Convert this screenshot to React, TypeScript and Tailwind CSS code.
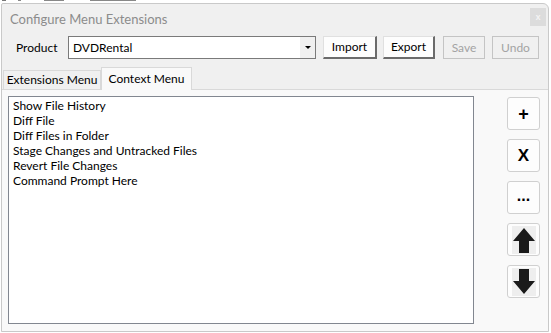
import React from "react";

const font = { fontFamily: "Lato, 'Noto Sans', sans-serif" };

function UpArrow() {
  return (
    <svg width="24" height="28" viewBox="0 0 24 28">
      <rect x="0" y="0" width="24" height="28" fill="#eeeeee" />
      <path d="M12 2 L23 15 L17 15 L17 27 L7 27 L7 15 L1 15 Z" fill="#1a1a1a" />
    </svg>
  );
}

function DownArrow() {
  return (
    <svg width="24" height="28" viewBox="0 0 24 28">
      <rect x="0" y="0" width="24" height="28" fill="#eeeeee" />
      <path d="M12 26 L23 13 L17 13 L17 1 L7 1 L7 13 L1 13 Z" fill="#1a1a1a" />
    </svg>
  );
}

function SideButton({ children }: { children: React.ReactNode }) {
  return (
    <div className="w-[33px] h-[33px] flex items-center justify-center bg-[#fdfdfd] border border-[#d0d0d0] rounded-[3px]">
      {children}
    </div>
  );
}

function ActionButton({ label, disabled, w }: { label: string; disabled?: boolean; w: string }) {
  return disabled ? (
    <div className={`${w} h-[23px] flex items-center justify-center border border-[#c4c4c4] bg-[#f0f0f0] text-[12px] text-[#a3a3a3]`}>
      {label}
    </div>
  ) : (
    <div className={`${w} h-[23px] flex items-center justify-center bg-[#fdfdfd] border-t border-l border-[#e0e0e0] border-r-2 border-b-2 border-r-[#6b6b6b] border-b-[#6b6b6b] text-[12px] text-black`}>
      {label}
    </div>
  );
}

const items = [
  "Show File History",
  "Diff File",
  "Diff Files in Folder",
  "Stage Changes and Untracked Files",
  "Revert File Changes",
  "Command Prompt Here",
];

export default function App() {
  return (
    <div className="w-[551px] h-[333px] bg-white relative overflow-hidden" style={font}>
      <div className="h-[3px] flex items-start bg-white">
        <div className="ml-[2px] w-[4px] h-[1px] bg-[#777]" />
        <div className="ml-[12px] w-[3px] h-[1px] bg-[#888]" />
        <div className="ml-[23px] w-[20px] h-[1px] bg-[#888]" />
        <div className="ml-[26px] w-[46px] h-[1px] bg-[#888]" />
      </div>
      <div className="ml-[1px] w-[548px] h-[329px] border border-[#c9c9c9] rounded-tr-[6px] rounded-tl-[2px] bg-[#f0f0f0] flex flex-col">
        {/* title */}
        <div className="h-[32px] flex items-start justify-between">
          <div className="pl-[8px] pt-[6px] text-[13px] text-[#8c8c8c]">Configure Menu Extensions</div>
          <div className="mt-[4px] mr-[2px] w-[16px] h-[18px] bg-[#dcdcdc] flex items-center justify-center text-[9px] text-[#f4f4f4] font-bold">
            x
          </div>
        </div>
        {/* product row */}
        <div className="h-[23px] flex items-center">
          <div className="pl-[14px] w-[66px] text-[12px] text-black">Product</div>
          <div className="w-[248px] h-[23px] bg-white border border-[#7a7a7a] flex items-center">
            <div className="flex-1 pl-[4px] text-[12px] text-black">DVDRental</div>
            <div className="w-[15px] h-full bg-[#f0f0f0] flex items-center justify-center">
              <svg width="6" height="3" viewBox="0 0 6 3"><path d="M0 0 L6 0 L3 3 Z" fill="#000" /></svg>
            </div>
          </div>
          <div className="ml-[7px]">
            <ActionButton label="Import" w="w-[54px]" />
          </div>
          <div className="ml-[6px]">
            <ActionButton label="Export" w="w-[52px]" />
          </div>
          <div className="ml-[8px]">
            <ActionButton label="Save" disabled w="w-[42px]" />
          </div>
          <div className="ml-[7px]">
            <ActionButton label="Undo" disabled w="w-[47px]" />
          </div>
        </div>
        {/* tabs */}
        <div className="mt-[8px] h-[22px] flex items-end pl-[1px] relative z-10">
          <div className="h-[19px] w-[98px] border border-b-0 border-[#d9d9d9] bg-[#f0f0f0] flex items-center justify-center text-[12px] text-black">
            Extensions Menu
          </div>
          <div className="h-[23px] -mb-[1px] w-[91px] border border-b-0 border-[#d9d9d9] bg-[#f9f9f9] flex items-center justify-center text-[12px] text-black">
            Context Menu
          </div>
        </div>
        {/* panel */}
        <div className="flex-1 border-t border-[#d9d9d9] bg-[#f9f9f9] flex pl-[6px] pt-[6px] pb-[7px]">
          <div className="w-[466px] h-[228px] bg-white border border-[#828790] pl-[4px] pt-[1px]">
            {items.map((t) => (
              <div key={t} className="h-[15px] leading-[15px] text-[12px] text-black whitespace-nowrap">
                {t}
              </div>
            ))}
          </div>
          <div className="ml-[33px] flex flex-col gap-[9px] pt-[1px]">
            <SideButton>
              <span className="text-[18px] font-bold leading-none text-black" style={{ fontFamily: "'Liberation Sans', sans-serif" }}>+</span>
            </SideButton>
            <SideButton>
              <span className="text-[17px] font-bold leading-none text-black" style={{ fontFamily: "'Liberation Sans', sans-serif" }}>X</span>
            </SideButton>
            <SideButton>
              <span className="text-[16px] font-bold leading-none text-black -mt-[4px]" style={{ fontFamily: "'Liberation Sans', sans-serif" }}>...</span>
            </SideButton>
            <SideButton>
              <UpArrow />
            </SideButton>
            <SideButton>
              <DownArrow />
            </SideButton>
          </div>
        </div>
      </div>
    </div>
  );
}
